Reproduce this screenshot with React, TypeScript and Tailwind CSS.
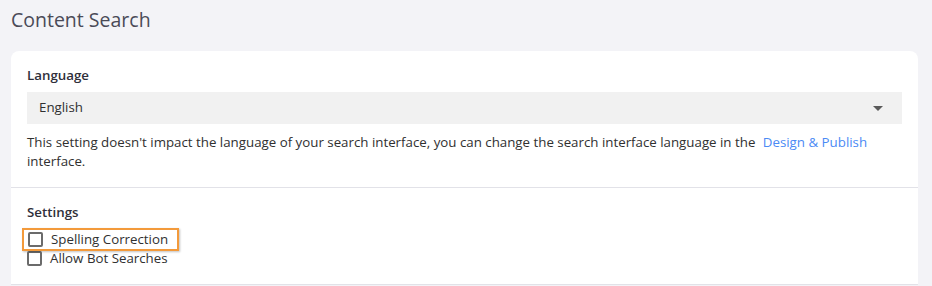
export default function App() {
  return (
    <div
      className="h-[286px] w-[932px] overflow-hidden bg-[#f3f3f7] text-[13.3px] text-[#303030]"
      style={{ fontFamily: '"Segoe UI", "Open Sans", sans-serif' }}
    >
      <h1 className="px-[11px] pt-[6px] text-[19.5px] leading-[28px] text-[#4a4a57]">Content Search</h1>
      <div className="mt-[17px] ml-[11px] w-[907px] rounded-t-lg bg-white">
        <div className="border-b border-[#e2e2e8] px-4 pt-[14px] pb-[16px]">
          <div className="font-semibold leading-[20px] text-[#2f2f3a]">Language</div>
          <div className="mt-[7px] flex h-[32px] items-center justify-between bg-[#f1f1f1] pr-[19px] pl-3">
            <span>English</span>
            <span className="h-0 w-0 border-x-[5px] border-t-[5px] border-x-transparent border-t-[#5a5a5a]" />
          </div>
          <p className="mt-[9px] leading-[19px]">
            This setting doesn't impact the language of your search interface, you can change the search
            interface language in the{" "}
            <a className="ml-[4px] text-[#4b8af5]">Design &amp; Publish</a>
            <br />
            interface.
          </p>
        </div>
        <div className="border-b border-[#e2e2e8] px-4 pt-[14px] pb-[16px]">
          <div className="font-semibold leading-[20px] text-[#2f2f3a]">Settings</div>
          <div className="mt-[6px] flex flex-col">
            <label className="relative z-10 -mb-[2px] -ml-[5px] flex w-[157px] items-center gap-2 border-2 border-[#f39a3b] pl-[4px] leading-[19px] shadow-[1px_1px_2px_rgba(0,0,0,0.25)]">
              <span className="h-[15px] w-[15px] rounded-[2px] border-2 border-[#6b6b6b]" />
              Spelling Correction
            </label>
            <label className="flex items-center gap-2 leading-[19px]">
              <span className="h-[15px] w-[15px] rounded-[2px] border-2 border-[#6b6b6b]" />
              Allow Bot Searches
            </label>
          </div>
        </div>
      </div>
    </div>
  );
}
